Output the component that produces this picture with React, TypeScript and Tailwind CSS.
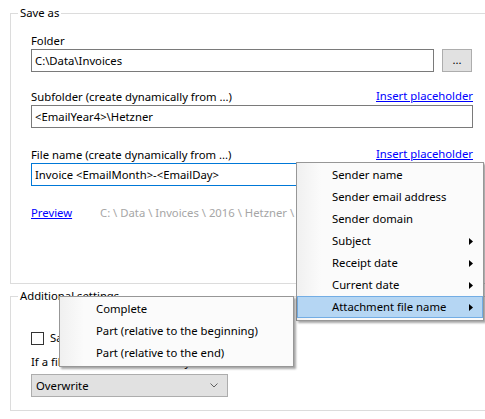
import React from "react";

function Arrow() {
  return (
    <svg width="4" height="7" viewBox="0 0 4 7" className="block">
      <path d="M0 0 L4 3.5 L0 7 Z" fill="#000" />
    </svg>
  );
}

function MenuItem({ label, sub, active, pl }: { label: string; sub?: boolean; active?: boolean; pl: string }) {
  return (
    <div
      className={
        "h-[22px] flex items-center justify-between pr-[9px] border " +
        pl +
        (active ? " bg-[#b5d6f3] border-[#73ade4]" : " border-transparent")
      }
    >
      <span className="leading-[16px]">{label}</span>
      {sub ? <Arrow /> : null}
    </div>
  );
}

export default function App() {
  return (
    <div className="relative w-[485px] h-[419px] overflow-hidden bg-white text-[11.3px] text-black font-['Noto_Sans',sans-serif]">
      <div className="pt-[13px] pl-[10px]">
        {/* Save as group */}
        <div className="w-[500px] h-[271px] border border-[#dcdcdc]">
          <div className="-mt-[9px] ml-[7px] px-[2px] bg-white w-fit leading-[16px]">Save as</div>
          <div className="pl-[20px] w-[462px]">
            <div className="mt-[12px] leading-[16px]">Folder</div>
            <div className="flex gap-[8px]">
              <div className="w-[403px] h-[23px] border border-[#7a7a7a] flex items-center pl-[3px] leading-[16px]">
                C:\Data\Invoices
              </div>
              <div className="w-[30px] h-[23px] border border-[#adadad] bg-[#e1e1e1] flex items-center justify-center leading-[10px] pb-[2px]">
                ...
              </div>
            </div>

            <div className="mt-[17px] w-[442px] flex justify-between leading-[16px]">
              <span>Subfolder (create dynamically from ...)</span>
              <span className="text-[#0000ff] underline -mt-[1px]">Insert placeholder</span>
            </div>
            <div className="w-[442px] h-[23px] border border-[#7a7a7a] flex items-center pl-[3px] leading-[16px]">
              &lt;EmailYear4&gt;\Hetzner
            </div>

            <div className="mt-[19px] w-[442px] flex justify-between leading-[16px]">
              <span>File name (create dynamically from ...)</span>
              <span className="text-[#0000ff] underline -mt-[1px]">Insert placeholder</span>
            </div>
            <div className="w-[442px] h-[23px] border border-[#0078d7] flex items-center pl-[3px] leading-[16px]">
              Invoice &lt;EmailMonth&gt;-&lt;EmailDay&gt;
            </div>

            <div className="mt-[19px] flex leading-[16px]">
              <span className="w-[69px] text-[#0000ff] underline">Preview</span>
              <span className="text-[#a6a6a6]">C: \ Data \ Invoices \ 2016 \ Hetzner \ Invoice 01-15.pdf</span>
            </div>
          </div>
        </div>

        {/* Additional settings group */}
        <div className="mt-[12px] w-[500px] h-[115px] border border-[#dcdcdc]">
          <div className="-mt-[9px] ml-[7px] px-[2px] bg-white w-fit leading-[16px]">Additional settings</div>
          <div className="pl-[20px]">
            <div className="mt-[26px] flex items-center gap-[6px] leading-[16px]">
              <div className="w-[13px] h-[13px] border border-[#333333] bg-white" />
              <span>Save attachments only</span>
            </div>
            <div className="mt-[8px] leading-[16px]">If a file with this name already exists:</div>
            <div className="mt-[4px] w-[197px] h-[23px] border border-[#adadad] bg-[#e1e1e1] flex items-center justify-between pl-[4px] pr-[9px] leading-[16px]">
              <span>Overwrite</span>
              <svg width="8" height="5" viewBox="0 0 8 5">
                <path d="M0.5 0.5 L4 4 L7.5 0.5" fill="none" stroke="#606060" strokeWidth="1" />
              </svg>
            </div>
          </div>
        </div>
      </div>

      {/* Placeholder menu */}
      <div className="absolute left-[296px] top-[162px] w-[188px] border border-[#979797] bg-[#fbfbfb] pt-[1px] pb-[2px] shadow-[2px_2px_2px_rgba(0,0,0,0.35)]">
        <div className="absolute left-0 top-0 bottom-0 w-[24px] bg-gradient-to-r from-[#f0f0f0] to-[#fbfbfb]" />
        <div className="relative">
          <MenuItem pl="pl-[34px]" label="Sender name" />
          <MenuItem pl="pl-[34px]" label="Sender email address" />
          <MenuItem pl="pl-[34px]" label="Sender domain" />
          <MenuItem pl="pl-[34px]" label="Subject" sub />
          <MenuItem pl="pl-[34px]" label="Receipt date" sub />
          <MenuItem pl="pl-[34px]" label="Current date" sub />
          <MenuItem pl="pl-[34px]" label="Attachment file name" sub active />
        </div>
      </div>

      {/* Sub menu */}
      <div className="absolute left-[59px] top-[296px] w-[235px] border border-[#979797] bg-[#fbfbfb] pt-[1px] pb-[2px] shadow-[2px_2px_2px_rgba(0,0,0,0.35)]">
        <div className="absolute left-0 top-0 bottom-0 w-[24px] bg-gradient-to-r from-[#f0f0f0] to-[#fbfbfb]" />
        <div className="relative">
          <MenuItem pl="pl-[35px]" label="Complete" />
          <MenuItem pl="pl-[35px]" label="Part (relative to the beginning)" />
          <MenuItem pl="pl-[35px]" label="Part (relative to the end)" />
        </div>
      </div>
    </div>
  );
}
